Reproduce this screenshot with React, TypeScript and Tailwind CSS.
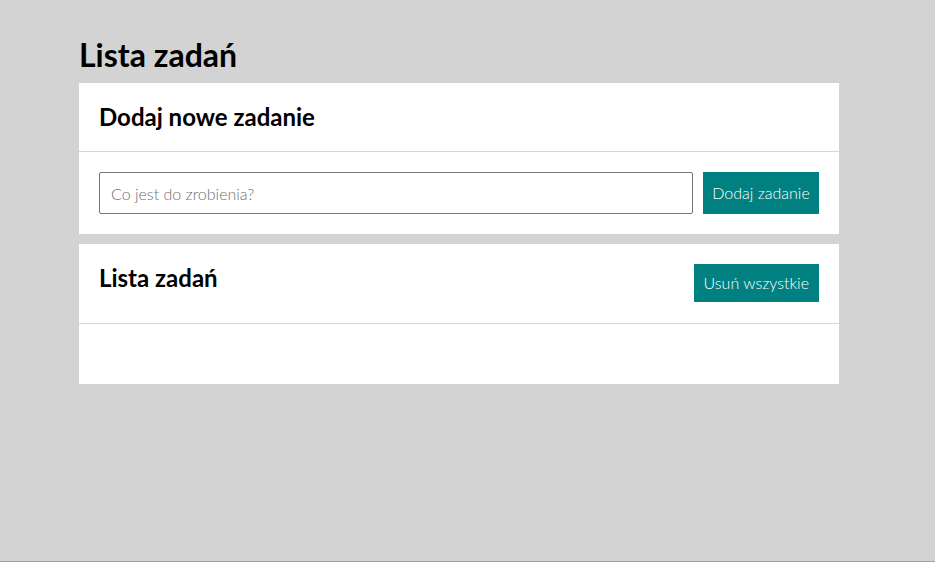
import { useState } from "react";

export default function App() {
  const [task, setTask] = useState<string>("");
  const [tasks, setTasks] = useState<string[]>([]);

  const addTask = () => {
    if (!task.trim()) return;
    setTasks([...tasks, task.trim()]);
    setTask("");
  };

  return (
    <div className="min-h-[562px] bg-[#d3d3d3] border-b border-[#a0a0a0] font-['Lato',sans-serif] text-black">
      <div className="w-[760px] ml-[79px] pt-[27px]">
        <h1 className="text-[32px] font-bold leading-[56px]">Lista zadań</h1>

        <section className="bg-white">
          <div className="px-5 h-[69px] flex items-center border-b border-[#d6d6d6]">
            <h2 className="text-[24px] font-bold leading-7">Dodaj nowe zadanie</h2>
          </div>
          <div className="p-5 flex gap-[10px] h-[82px]">
            <input
              value={task}
              onChange={(e) => setTask(e.target.value)}
              placeholder="Co jest do zrobienia?"
              className="flex-1 h-[42px] border border-[#767676] rounded-[2px] px-[11px] text-[16px] font-light placeholder:text-[#6f6f6f] outline-none"
            />
            <button
              onClick={addTask}
              className="h-[42px] w-[116px] bg-[#008080] text-white text-[16px] font-light"
            >
              Dodaj zadanie
            </button>
          </div>
        </section>

        <section className="bg-white mt-[10px]">
          <div className="px-5 pt-5 pb-[21px] flex justify-between items-start border-b border-[#d6d6d6]">
            <h2 className="text-[24px] font-bold leading-7">Lista zadań</h2>
            <button
              onClick={() => setTasks([])}
              className="h-[38px] px-[10px] bg-[#008080] text-white text-[16px] font-light"
            >
              Usuń wszystkie
            </button>
          </div>
          <ul className="h-[60px] px-5">
            {tasks.map((t, i) => (
              <li key={i} className="py-2">
                {t}
              </li>
            ))}
          </ul>
        </section>
      </div>
    </div>
  );
}
